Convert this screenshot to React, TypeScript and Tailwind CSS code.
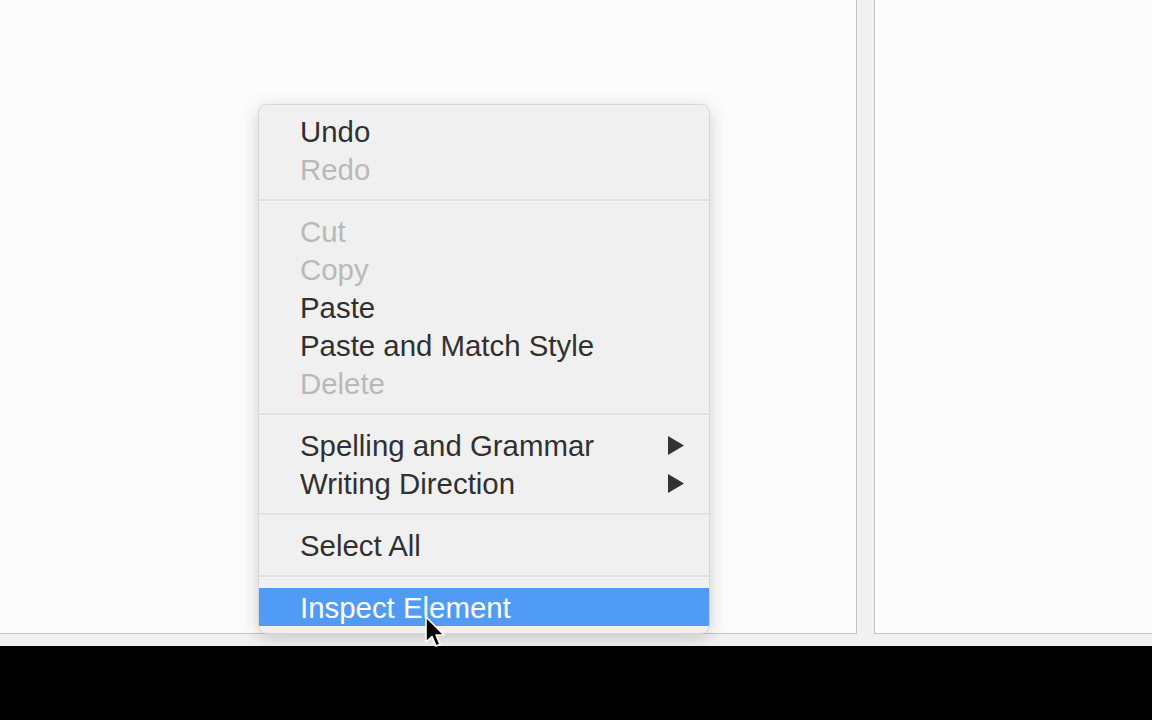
type Item = { label: string; disabled?: boolean; submenu?: boolean; active?: boolean }

const GROUPS: Item[][] = [
  [{ label: 'Undo' }, { label: 'Redo', disabled: true }],
  [
    { label: 'Cut', disabled: true },
    { label: 'Copy', disabled: true },
    { label: 'Paste' },
    { label: 'Paste and Match Style' },
    { label: 'Delete', disabled: true },
  ],
  [
    { label: 'Spelling and Grammar', submenu: true },
    { label: 'Writing Direction', submenu: true },
  ],
  [{ label: 'Select All' }],
  [{ label: 'Inspect Element', active: true }],
]

function MenuRow({ item }: { item: Item }) {
  const color = item.active ? 'bg-[#4f9bf6] text-white' : item.disabled ? 'text-[#b9b9b9]' : 'text-[#303030]'
  return (
    <div className={`flex h-[38px] items-center justify-between pl-[41px] pr-[25px] ${color}`}>
      <span className="pt-[2px] leading-none">{item.label}</span>
      {item.submenu && (
        <svg width="16" height="19" viewBox="0 0 16 19">
          <path d="M0 0 L16 9.5 L0 19 Z" fill="#333333" />
        </svg>
      )}
    </div>
  )
}

function Separator() {
  return (
    <div className="flex h-[24px] flex-col justify-center">
      <div className="h-[2px] bg-[#e0e0e0]" />
      <div className="h-[1px] bg-[#f6f6f6]" />
    </div>
  )
}

export default function App() {
  return (
    <div className="relative flex h-[720px] w-[1152px] flex-col overflow-hidden bg-black font-['Liberation_Sans',Arial,sans-serif]">
      <div className="flex h-[646px] bg-[#f1f1f1]">
        <div className="h-[634px] w-[857px] border-b border-r border-[#c4c4c4] bg-[#fcfcfc]" />
        <div className="ml-[17px] h-[634px] flex-1 border-b border-l border-[#c4c4c4] bg-[#fcfcfc]" />
      </div>

      <div className="absolute left-[258px] top-[104px] w-[452px] overflow-hidden rounded-[9px] border border-[#d6d6d6] bg-[#f0f0f0] pb-[7px] pt-[7px] text-[29.4px] shadow-[0_4px_18px_rgba(0,0,0,0.18)]">
        {GROUPS.map((group, gi) => (
          <div key={gi}>
            {gi > 0 && <Separator />}
            {group.map((item) => (
              <MenuRow key={item.label} item={item} />
            ))}
          </div>
        ))}
      </div>

      <svg className="absolute left-[424px] top-[616px]" width="24" height="34" viewBox="0 0 24 34">
        <path
          d="M2 1 L2 26 L8 20.5 L12 30 L16 28.3 L12 19 L20 19 Z"
          fill="#000"
          stroke="#fff"
          strokeWidth="1.6"
          strokeLinejoin="round"
        />
      </svg>
    </div>
  )
}
